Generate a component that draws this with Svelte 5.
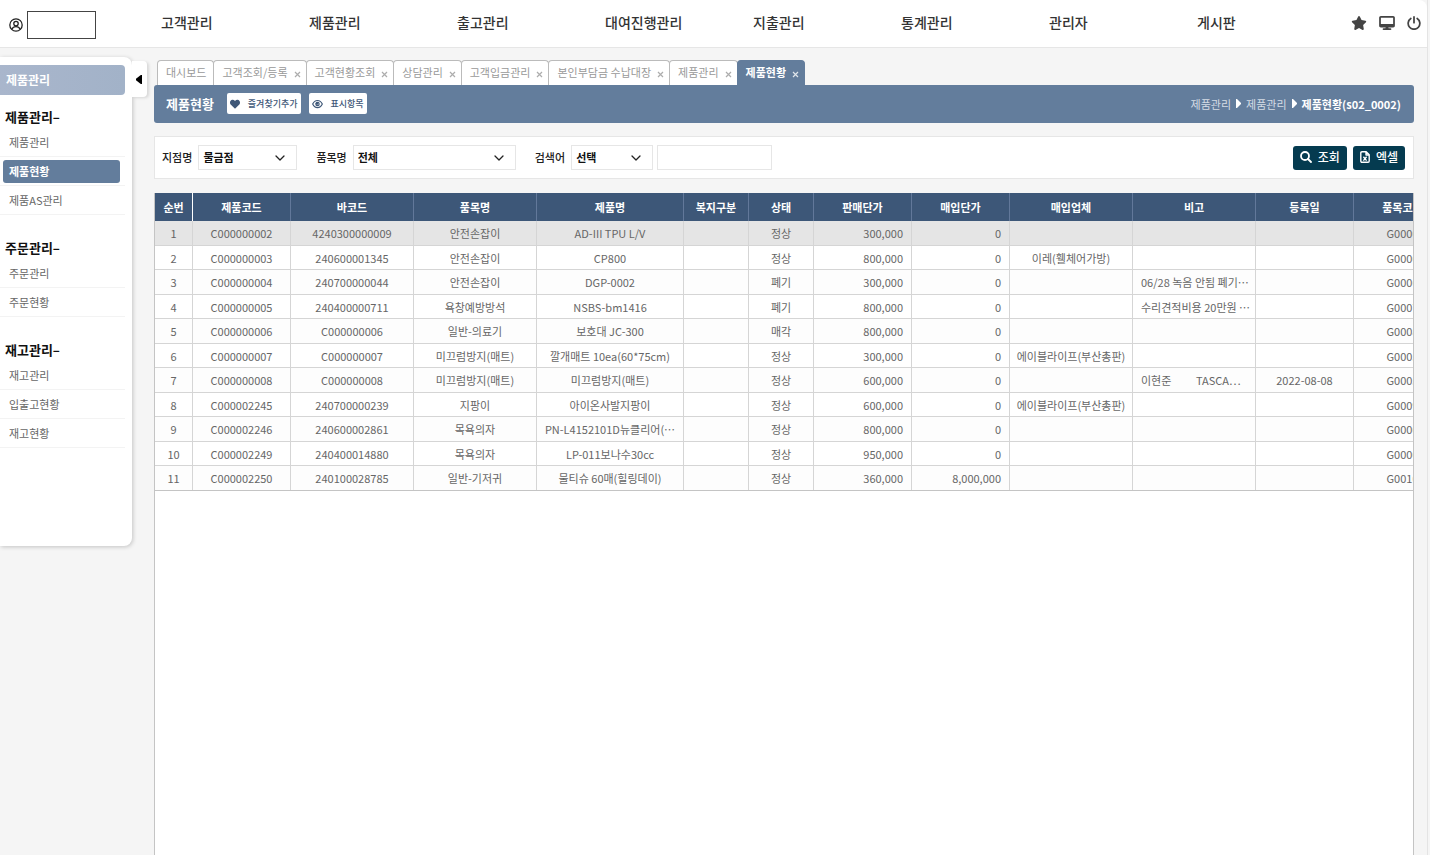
<script>
    const menus = ["고객관리", "제품관리", "출고관리", "대여진행관리", "지출관리", "통계관리", "관리자", "게시판"];

    const groups = [
        { title: "제품관리", items: ["제품관리", "제품현황", "제품AS관리"] },
        { title: "주문관리", items: ["주문관리", "주문현황"] },
        { title: "재고관리", items: ["재고관리", "입출고현황", "재고현황"] },
    ];

    const columns = [
        { name: "순번", cls: "no" },
        { name: "제품코드", cls: "md" },
        { name: "바코드", cls: "lg" },
        { name: "품목명", cls: "lg" },
        { name: "제품명", cls: "xl" },
        { name: "복지구분", cls: "sm" },
        { name: "상태", cls: "sm" },
        { name: "판매단가", cls: "md" },
        { name: "매입단가", cls: "md" },
        { name: "매입업체", cls: "lg" },
        { name: "비고", cls: "lg" },
        { name: "등록일", cls: "md" },
        { name: "품목코드", cls: "md" },
    ];

    const rows = [
        [1, "C000000002", "4240300000009", "안전손잡이", "AD-III TPU L/V", "", "정상", "300,000", "0", "", "", "", "G0000"],
        [2, "C000000003", "240600001345", "안전손잡이", "CP800", "", "정상", "800,000", "0", "이레(휄체어가방)", "", "", "G0000"],
        [3, "C000000004", "240700000044", "안전손잡이", "DGP-0002", "", "폐기", "300,000", "0", "", "06/28 녹음 안됨 폐기…", "", "G0006"],
        [4, "C000000005", "240400000711", "욕창예방방석", "NSBS-bm1416", "", "폐기", "800,000", "0", "", "수리견적비용 20만원 …", "", "G0007"],
        [5, "C000000006", "C000000006", "일반-의료기", "보호대 JC-300", "", "매각", "800,000", "0", "", "", "", "G0008"],
        [6, "C000000007", "C000000007", "미끄럼방지(매트)", "깔개매트 10ea(60*75cm)", "", "정상", "300,000", "0", "에이블라이프(부산총판)", "", "", "G0005"],
        [7, "C000000008", "C000000008", "미끄럼방지(매트)", "미끄럼방지(매트)", "", "정상", "600,000", "0", "", "이현준          TASCA⋯", "2022-08-08", "G0005"],
        [8, "C000002245", "240700000239", "지팡이", "아이온사발지팡이", "", "정상", "600,000", "0", "에이블라이프(부산총판)", "", "", "G0009"],
        [9, "C000002246", "240600002861", "목욕의자", "PN-L4152101D뉴클리어(…", "", "정상", "800,000", "0", "", "", "", "G0000"],
        [10, "C000002249", "240400014880", "목욕의자", "LP-011보나수30cc", "", "정상", "950,000", "0", "", "", "", "G0000"],
        [11, "C000002250", "240100028785", "일반-기저귀", "물티슈 60매(힐링데이)", "", "정상", "360,000", "8,000,000", "", "", "", "G0010"],
    ];

    let tabs = $state(["대시보드", "고객조회/등록", "고객현황조회", "상담관리", "고객입금관리", "본인부담금 수납대장", "제품관리", "제품현황"]);
    let current = $state("제품현황");
    let selected = $state(1);
    let sideOpen = $state(true);
    let keyword = $state("");

    function closeTab(tab) {
        tabs = tabs.filter((t) => t !== tab);
        if (current === tab) current = tabs[tabs.length - 1];
    }
</script>

{#snippet chevron()}
    <svg class="chevron" width="10" height="6" viewBox="0 0 10 6" aria-hidden="true">
        <path d="M1 1l4 4 4-4" fill="none" stroke="#222" stroke-width="1.3" stroke-linecap="round" stroke-linejoin="round" />
    </svg>
{/snippet}

<div class="page">
    <header>
        <div class="user">
            <svg width="14" height="14" viewBox="0 0 24 24" fill="none" stroke="#222" stroke-width="2.2" aria-hidden="true">
                <circle cx="12" cy="12" r="10.6" />
                <circle cx="12" cy="9.6" r="3.8" />
                <path d="M5 19.5c1.2-3.2 3.8-4.6 7-4.6s5.8 1.4 7 4.6" />
            </svg>
            <div class="user-name"></div>
        </div>
        <nav>
            {#each menus as menu}
                <a href="#top">{menu}</a>
            {/each}
        </nav>
        <div class="tools">
            <button aria-label="즐겨찾기">
                <svg width="16" height="14" viewBox="0 0 576 512" fill="#444"><path d="M316.900 18C311.600 7 300.400 0 288.100 0s-23.400 7-28.800 18L195 150.300 51.400 171.500c-12 1.800-22 10.200-25.700 21.700s-.7 24.200 7.900 32.700L137.800 329 113.200 474.700c-2 12 3 24.200 12.900 31.300s23 8 33.800 2.300l128.300-68.500 128.300 68.500c10.800 5.700 23.900 4.900 33.800-2.300s14.900-19.300 12.900-31.300L438.500 329 542.700 225.900c8.600-8.500 11.700-21.200 7.900-32.700s-13.700-19.900-25.700-21.700L381.200 150.300 316.900 18z" /></svg>
            </button>
            <button aria-label="화면">
                <svg width="16" height="14" viewBox="0 0 576 512" fill="#444"><path d="M64 0C28.700 0 0 28.700 0 64v288c0 35.300 28.700 64 64 64h176l-10.700 32H160c-17.700 0-32 14.300-32 32s14.300 32 32 32h256c17.700 0 32-14.300 32-32s-14.300-32-32-32h-69.300L336 416h176c35.300 0 64-28.700 64-64V64c0-35.300-28.700-64-64-64H64zm448 64v224H64V64h448z" /></svg>
            </button>
            <button aria-label="로그아웃">
                <svg width="14" height="14" viewBox="0 0 24 24" fill="none" stroke="#444" stroke-width="3" stroke-linecap="round"><path d="M12 1.500v10M6.500 4.300a10 10 0 1 0 11 0" /></svg>
            </button>
        </div>
    </header>

    <div class="body">
        <div class="side-wrap">
            {#if sideOpen}
                <aside>
                    <h2>제품관리</h2>
                    {#each groups as group}
                        <section>
                            <h3>{group.title}–</h3>
                            <ul>
                                {#each group.items as item}
                                    <li><a href="#top" class:active={item === "제품현황"}>{item}</a></li>
                                {/each}
                            </ul>
                        </section>
                    {/each}
                </aside>
            {/if}
            <button class="toggle" aria-label="메뉴 접기" onclick={() => (sideOpen = !sideOpen)}>
                <svg width="6" height="9" viewBox="0 0 6 9"><path d="M6 0v9L4.800 9 0 5.200V3.800L4.800 0z" fill="#000" /></svg>
            </button>
        </div>

        <main>
            <div class="tabs">
                {#each tabs as tab, i}
                    <div class="tab" class:on={tab === current}>
                        <button onclick={() => (current = tab)}>{tab}</button>
                        {#if i > 0}
                            <button class="close" aria-label="{tab} 닫기" onclick={() => closeTab(tab)}>
                                <svg width="7" height="7" viewBox="0 0 7 7"><path d="M1 1l5 5M6 1L1 6" stroke="currentColor" stroke-width="1.2" /></svg>
                            </button>
                        {/if}
                    </div>
                {/each}
            </div>

            <div class="title-bar">
                <h1>제품현황</h1>
                <button>
                    <svg width="10" height="10" viewBox="0 0 512 512" fill="#3f5878"><path d="M47.600 300.400L228.300 469.100c7.500 7 17.400 10.900 27.700 10.900s20.200-3.900 27.700-10.900L464.400 300.400c30.400-28.300 47.600-68 47.600-109.500v-5.800c0-69.900-50.500-129.500-119.400-141C347 36.500 300.600 51.400 268 84l-12 12-12-12c-32.600-32.600-79-47.500-124.600-39.900C50.500 55.600 0 115.200 0 185.100v5.800c0 41.500 17.200 81.200 47.600 109.500z" /></svg>
                    즐겨찾기추가
                </button>
                <button>
                    <svg width="11" height="10" viewBox="0 0 24 20" fill="none" stroke="#3f5878" stroke-width="2.600"><path d="M1.500 10C4 4.800 7.700 2.300 12 2.300S20 4.800 22.500 10C20 15.200 16.300 17.700 12 17.700S4 15.200 1.500 10z" /><circle cx="12" cy="10" r="3.600" /><circle cx="11" cy="9" r="1.500" fill="#3f5878" /></svg>
                    표시항목
                </button>
                <div class="crumbs">
                    <span>제품관리</span>
                    <svg width="5" height="9" viewBox="0 0 5 9"><path d="M0 0h1l4 4v1L1 9H0z" fill="#fff" /></svg>
                    <span>제품관리</span>
                    <svg width="5" height="9" viewBox="0 0 5 9"><path d="M0 0h1l4 4v1L1 9H0z" fill="#fff" /></svg>
                    <strong>제품현황(s02_0002)</strong>
                </div>
            </div>

            <form class="search" onsubmit={(e) => e.preventDefault()}>
                <label for="branch">지점명</label>
                <div class="select branch">
                    <select id="branch"><option>물금점</option></select>
                    {@render chevron()}
                </div>
                <label for="item">품목명</label>
                <div class="select item">
                    <select id="item"><option>전체</option></select>
                    {@render chevron()}
                </div>
                <label for="kind">검색어</label>
                <div class="select kind">
                    <select id="kind"><option>선택</option></select>
                    {@render chevron()}
                </div>
                <input type="text" aria-label="검색어 입력" bind:value={keyword} />
                <div class="actions">
                    <button type="submit">
                        <svg width="12" height="12" viewBox="0 0 12 12" fill="none" stroke="#fff" stroke-width="1.800" stroke-linecap="round"><circle cx="5" cy="5" r="4" /><path d="M8 8l3 3" /></svg>
                        조회
                    </button>
                    <button type="button">
                        <svg width="10" height="12" viewBox="0 0 10 12" fill="none" stroke="#fff" stroke-width="1.400" stroke-linejoin="round"><path d="M.8 2c0-.8.4-1.2 1.2-1.2h4.200l3 3V10c0 .8-.4 1.200-1.200 1.200H2c-.8 0-1.200-.4-1.200-1.200zM6 1v3h3" /><path d="M3.400 5.800l3.200 3.800M6.600 5.800L3.400 9.600" /></svg>
                        엑셀
                    </button>
                </div>
            </form>

            <div class="grid">
                <table>
                    <colgroup>
                        {#each columns as col}
                            <col class={col.cls} />
                        {/each}
                    </colgroup>
                    <thead>
                        <tr>
                            {#each columns as col}
                                <th>{col.name}</th>
                            {/each}
                        </tr>
                    </thead>
                    <tbody>
                        {#each rows as row}
                            <tr class:selected={row[0] === selected} onclick={() => (selected = row[0])}>
                                {#each row as cell, i}
                                    <td class:num={i === 7 || i === 8} class:memo={i === 10}>{cell}</td>
                                {/each}
                            </tr>
                        {/each}
                    </tbody>
                </table>
            </div>
        </main>
    </div>
</div>

<style>
    :global(body) {
        background: #f5f5f5;
    }

    .page {
        display: flex;
        flex-direction: column;
        box-sizing: border-box;
        height: 100vh;
        margin-right: 2px;
        border-right: 1px solid #e4e4e4;
        overflow: hidden;
        font-family: "Noto Sans CJK KR", "Noto Sans", sans-serif;
        font-size: 11px;
        line-height: 16px;
        color: #666;
    }

    button,
    input,
    select {
        font: inherit;
        color: inherit;
    }

    button {
        display: flex;
        align-items: center;
        padding: 0;
        border: none;
        background: none;
        cursor: pointer;
    }

    a {
        color: inherit;
        text-decoration: none;
    }

    h1,
    h2,
    h3,
    ul {
        margin: 0;
        padding: 0;
    }

    header {
        display: flex;
        align-items: center;
        height: 47px;
        background: #fff;
        border-bottom: 1px solid #e6e6e6;
        border-top-right-radius: 8px;
    }

    .user {
        display: flex;
        align-items: center;
        gap: 4px;
        width: 152px;
        padding: 2px 0 0 9px;
    }

    .user-name {
        width: 67px;
        height: 26px;
        border: 1px solid #444;
    }

    nav {
        display: grid;
        grid-template-columns: repeat(8, 1fr);
        flex: 1;
        padding-bottom: 4px;
        font-size: 14px;
        line-height: 20px;
        font-weight: 500;
        color: #333;
    }

    .tools {
        display: flex;
        justify-content: flex-end;
        gap: 12px;
        width: 76px;
        padding: 0 6px 2px 0;
    }

    .body {
        display: flex;
        flex: 1;
        min-height: 0;
    }

    .side-wrap {
        display: flex;
        align-items: flex-start;
        padding: 9px 7px 0 0;
    }

    aside {
        box-sizing: border-box;
        width: 132px;
        min-height: 489px;
        padding: 8px 7px 0 0;
        background: #fff;
        border-radius: 0 8px 8px 0;
        box-shadow: 1px 1px 4px rgba(0, 0, 0, 0.2);
    }

    aside h2 {
        margin-bottom: 11px;
        padding-left: 6px;
        border-radius: 0 4px 4px 0;
        background: linear-gradient(90deg, #a9b6cc, #a2b2c8);
        color: #fff;
        font-size: 12px;
        line-height: 30px;
    }

    section {
        margin-bottom: 22px;
    }

    h3 {
        padding-left: 5px;
        font-size: 13px;
        line-height: 22px;
        color: #111;
    }

    li {
        box-sizing: border-box;
        height: 29px;
        padding: 3px 5px 2px 3px;
        border-bottom: 1px solid #f3f3f3;
        list-style: none;
    }

    li a {
        display: block;
        padding-left: 6px;
        line-height: 23px;
    }

    li a.active {
        border-radius: 3px;
        background: #637d9c;
        color: #fff;
        font-weight: 700;
    }

    .toggle {
        justify-content: center;
        width: 15px;
        height: 36px;
        margin-top: 4px;
        padding-right: 2px;
        border-radius: 0 4px 4px 0;
        background: #fff;
        box-shadow: 2px 1px 3px rgba(0, 0, 0, 0.12);
    }

    main {
        display: flex;
        flex: 1;
        flex-direction: column;
        min-width: 0;
        padding: 12px 13px 0 0;
    }

    .tabs {
        display: flex;
        padding-left: 3px;
    }

    .tab {
        display: flex;
        align-items: center;
        gap: 6px;
        box-sizing: border-box;
        height: 25px;
        padding: 0 5px 2px 8px;
        border: 1px solid #bbb;
        border-bottom: none;
        border-radius: 4px 4px 0 0;
        background: #fff;
        color: #999;
    }

    .tab + .tab {
        margin-left: -1px;
    }

    .tab:first-child {
        padding-right: 7px;
    }

    .tab.on {
        border-color: #637d9c;
        background: #637d9c;
        color: #fff;
        font-weight: 700;
    }

    .close {
        padding-top: 4px;
        opacity: 0.8;
    }

    .title-bar {
        display: flex;
        align-items: center;
        box-sizing: border-box;
        height: 38px;
        padding: 0 13px 1px 12px;
        border-radius: 3px;
        background: #637d9c;
        color: #fff;
    }

    h1 {
        margin-right: 13px;
        font-size: 13px;
        line-height: 20px;
    }

    .title-bar button {
        gap: 8px;
        height: 21px;
        margin-right: 8px;
        padding: 0 3px;
        border-radius: 2px;
        background: #fff;
        color: #3f5878;
        font-size: 9px;
        font-weight: 500;
    }

    .crumbs {
        display: flex;
        align-items: center;
        gap: 5px;
        margin-left: auto;
    }

    .crumbs span {
        color: #d5dce5;
    }

    .search {
        display: flex;
        align-items: center;
        height: 41px;
        margin: 13px 0 14px;
        padding: 0 8px 0 7px;
        border: 1px solid #e6e6e6;
        background: #fff;
        color: #222;
        font-weight: 500;
    }

    label {
        padding-bottom: 2px;
    }

    .select {
        position: relative;
        margin: 0 19px 0 6px;
    }

    .branch {
        width: 99px;
    }

    .item {
        width: 163px;
    }

    .kind {
        width: 82px;
        margin-right: 4px;
    }

    select,
    input {
        box-sizing: border-box;
        width: 100%;
        height: 25px;
        padding: 0 4px 2px;
        border: 1px solid #e6e6e6;
        border-radius: 0;
        background: #fff;
        appearance: none;
    }

    select {
        color: #111;
        font-weight: 700;
    }

    input {
        width: 115px;
    }

    .chevron {
        position: absolute;
        top: 10px;
        right: 12px;
        pointer-events: none;
    }

    .actions {
        display: flex;
        gap: 6px;
        margin-left: auto;
    }

    .actions button {
        gap: 6px;
        height: 24px;
        padding: 0 7px 1px;
        border-radius: 3px;
        background: #053b50;
        color: #fff;
        font-size: 12px;
    }

    .grid {
        flex: 1;
        min-height: 0;
        border: 1px solid #c4c4c4;
        border-top: none;
        border-bottom: none;
        background: #fff;
        overflow: hidden;
    }

    table {
        width: 1297px;
        table-layout: fixed;
        border-collapse: separate;
        border-spacing: 0;
        border-bottom: 1px solid #c4c4c4;
    }

    .no {
        width: 38px;
    }

    .sm {
        width: 65px;
    }

    .md {
        width: 98px;
    }

    .lg {
        width: 123px;
    }

    .xl {
        width: 147px;
    }

    th,
    td {
        box-sizing: border-box;
        padding: 0;
        text-align: center;
        white-space: pre;
        overflow: hidden;
    }

    th {
        height: 28px;
        border-right: 1px solid #62789a;
        background: #3d5778;
        color: #fff;
        font-weight: 700;
    }

    th:first-child {
        border-right-color: #fff;
    }

    td {
        height: 24px;
        border-right: 1px solid #d5d5d5;
        border-bottom: 1px solid #d5d5d5;
    }

    tbody tr:nth-child(odd) td {
        height: 25px;
        background: #fdfdfd;
    }

    tbody tr:last-child td {
        height: 24px;
        border-bottom: none;
    }

    tbody tr.selected td {
        background: #e5e5e5;
    }

    td.num {
        padding-right: 8px;
        text-align: right;
    }

    td.memo {
        padding-left: 8px;
        text-align: left;
    }
</style>
